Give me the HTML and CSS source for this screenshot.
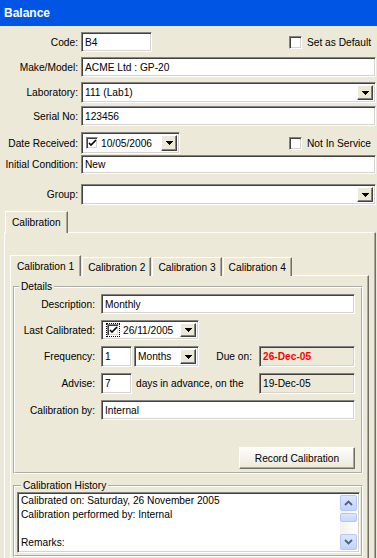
FILE: index.html
```html
<!DOCTYPE html>
<html lang="en">
<head>
    <meta charset="UTF-8">
    <meta name="viewport" content="width=device-width, initial-scale=1.0">
    <title>Balance</title>
    <link rel="stylesheet" href="styles.css">
</head>
<body>
    <div class="titlebar">Balance</div>

    <div class="form">
        <div class="row">
            <span class="lbl">Code:</span>
            <div class="field w-code">B4</div>
            <label class="check"><span class="box"></span>Set as Default</label>
        </div>
        <div class="row">
            <span class="lbl">Make/Model:</span>
            <div class="field grow">ACME Ltd : GP-20</div>
        </div>
        <div class="row row-tall">
            <span class="lbl">Laboratory:</span>
            <div class="field select grow">111 (Lab1)
                <span class="dd"><svg width="7" height="4" viewBox="0 0 7 4"><path d="M0 0h7v1H0zM1 1h5v1H1zM2 2h3v1H2zM3 3h1v1H3z"/></svg></span>
            </div>
        </div>
        <div class="row row-serial">
            <span class="lbl">Serial No:</span>
            <div class="field grow">123456</div>
        </div>
        <div class="row row-date">
            <span class="lbl">Date Received:</span>
            <div class="field select picker w-date">
                <span class="box small checked"><svg width="9" height="9" viewBox="0 0 9 9"><path d="M1 4l2 2 5-5" fill="none" stroke="#000" stroke-width="1.6"/></svg></span>
                <span class="date">10/05/2006</span>
                <span class="dd"><svg width="7" height="4" viewBox="0 0 7 4"><path d="M0 0h7v1H0zM1 1h5v1H1zM2 2h3v1H2zM3 3h1v1H3z"/></svg></span>
            </div>
            <label class="check"><span class="box"></span>Not In Service</label>
        </div>
        <div class="row row-init">
            <span class="lbl">Initial Condition:</span>
            <div class="field grow">New</div>
        </div>
        <div class="row row-group">
            <span class="lbl">Group:</span>
            <div class="field select grow">
                <span class="dd"><svg width="7" height="4" viewBox="0 0 7 4"><path d="M0 0h7v1H0zM1 1h5v1H1zM2 2h3v1H2zM3 3h1v1H3z"/></svg></span>
            </div>
        </div>
    </div>

    <div class="tabs outer">
        <div class="tabstrip">
            <div class="tab active">Calibration</div>
        </div>
        <div class="panel outer-panel">
            <div class="tabstrip inner">
                <div class="tab active">Calibration 1</div>
                <div class="tab">Calibration 2</div>
                <div class="tab">Calibration 3</div>
                <div class="tab">Calibration 4</div>
            </div>
            <div class="panel inner-panel">
                <fieldset class="group details">
                    <legend>Details</legend>
                    <div class="drow">
                        <span class="dlbl">Description:</span>
                        <div class="field grow">Monthly</div>
                    </div>
                    <div class="drow">
                        <span class="dlbl">Last Calibrated:</span>
                        <div class="field select picker w-last">
                            <span class="focus"><span class="box small checked"><svg width="9" height="9" viewBox="0 0 9 9"><path d="M1 4l2 2 5-5" fill="none" stroke="#000" stroke-width="1.6"/></svg></span></span>
                            <span class="date">26/11/2005</span>
                            <span class="dd"><svg width="7" height="4" viewBox="0 0 7 4"><path d="M0 0h7v1H0zM1 1h5v1H1zM2 2h3v1H2zM3 3h1v1H3z"/></svg></span>
                        </div>
                    </div>
                    <div class="drow drow-tall">
                        <span class="dlbl">Frequency:</span>
                        <div class="field w-num">1</div>
                        <div class="field select w-unit">Months
                            <span class="dd"><svg width="7" height="4" viewBox="0 0 7 4"><path d="M0 0h7v1H0zM1 1h5v1H1zM2 2h3v1H2zM3 3h1v1H3z"/></svg></span>
                        </div>
                        <span class="side-lbl">Due on:</span>
                        <div class="field readonly w-side due">26-Dec-05</div>
                    </div>
                    <div class="drow drow-tall">
                        <span class="dlbl">Advise:</span>
                        <div class="field w-num">7</div>
                        <span class="after">days in advance, on the</span>
                        <div class="field readonly w-side">19-Dec-05</div>
                    </div>
                    <div class="drow">
                        <span class="dlbl">Calibration by:</span>
                        <div class="field grow">Internal</div>
                    </div>
                    <div class="actions">
                        <button class="btn">Record Calibration</button>
                    </div>
                </fieldset>

                <fieldset class="group history">
                    <legend>Calibration History</legend>
                    <div class="field memo">
                        <div class="memo-text">
                            <div>Calibrated on: Saturday, 26 November 2005</div>
                            <div>Calibration performed by: Internal</div>
                            <div>&nbsp;</div>
                            <div>Remarks:</div>
                        </div>
                        <div class="scrollbar">
                            <span class="sb-btn"><svg width="9" height="6" viewBox="0 0 9 6"><path d="M1 5l3.5-3.5L8 5" fill="none" stroke="#4d6185" stroke-width="1.8"/></svg></span>
                            <span class="sb-thumb"></span>
                            <span class="sb-track"></span>
                            <span class="sb-btn"><svg width="9" height="6" viewBox="0 0 9 6"><path d="M1 1l3.5 3.5L8 1" fill="none" stroke="#4d6185" stroke-width="1.8"/></svg></span>
                        </div>
                    </div>
                </fieldset>
            </div>
        </div>
    </div>
</body>
</html>
```

FILE: styles.css
```css
* { box-sizing: border-box; }
body { margin: 0; width: 377px; height: 558px; overflow: hidden; background: #ece9d8; font-family: "Liberation Sans", Arial, sans-serif; font-size: 10.2px; color: #000; }

.titlebar { height: 26px; padding-left: 4px; display: flex; align-items: center; background: #0055e5; color: #fff; font-weight: bold; font-size: 12px; }

/* top form */
.form { padding: 6px 1px 0 0; }
.row { display: flex; align-items: center; height: 20px; margin-top: 5px; }
.row:first-child { margin-top: 0; }
.row-tall { height: 21px; }
.row-serial { margin-top: 3px; }
.row-date { height: 22px; margin-top: 6px; }
.row-init { height: 19px; margin-top: 1px; }
.row-group { height: 21px; margin-top: 10px; }
.lbl { flex: none; width: 81px; padding-right: 3px; text-align: right; white-space: nowrap; }

.field { height: 100%; display: flex; align-items: center; padding: 0 3px; background: #fff; white-space: nowrap; border: 1px solid; border-color: #848284 #fff #fff #848284; box-shadow: inset 1px 1px 0 #424142, inset -1px -1px 0 #d6d3ce; }
.grow { flex: 1; }
.w-code { width: 71px; }
.w-date { width: 99px; }
.select { padding-right: 2px; }
.dd { margin-left: auto; flex: none; width: 16px; height: calc(100% - 4px); display: flex; align-items: center; justify-content: center; background: #ece9d8; border: 1px solid; border-color: #fff #424142 #424142 #fff; box-shadow: inset -1px -1px 0 #848284; }
.dd svg { display: block; }
.picker { padding-left: 4px; }
.date { margin-left: 3px; }

.check { margin-left: auto; padding-right: 5px; display: flex; align-items: center; gap: 5px; }
.box { flex: none; width: 13px; height: 13px; display: flex; align-items: center; justify-content: center; background: #fff; border: 1px solid; border-color: #848284 #fff #fff #848284; box-shadow: inset 1px 1px 0 #424142, inset -1px -1px 0 #d6d3ce; }
.box.small { width: 12px; height: 12px; }
.focus { padding: 1px; outline: 1px dotted #000; outline-offset: -1px; display: flex; }

/* tabs */
.tabs { margin: 6px 1px 0 4px; }
.tabstrip { display: flex; align-items: flex-end; gap: 1px; padding-left: 1px; }
.tab { height: 19px; padding: 0 5px; display: flex; align-items: center; margin-bottom: -1px; background: #ece9d8; border: 1px solid; border-bottom: 0; border-color: #fff #716f64 transparent #fff; box-shadow: inset -1px 0 0 #aca899; white-space: nowrap; }
.tab.active { height: 22px; padding: 0 6px; position: relative; z-index: 1; }
.inner .tab.active { height: 21px; }
.tabstrip.inner { padding-left: 0; }

.panel { border: 1px solid; border-color: #fff #716f64 #716f64 #fff; box-shadow: inset -1px -1px 0 #aca899; }
.outer-panel { padding: 22px 6px 10px 5px; height: 340px; }
.inner-panel { padding: 4px 5px 10px 2px; height: 300px; }

/* group boxes */
.group { margin: 0; padding: 0 6px 0 0; border: 2px groove #fff; min-width: 0; }
.group legend { margin-left: 4px; padding: 0 2px; line-height: 13px; }
.drow { display: flex; align-items: center; height: 20px; margin-top: 6px; }
.drow:first-of-type { margin-top: 1px; }
.drow-tall { height: 21px; }
.dlbl { flex: none; width: 86px; padding-right: 6px; text-align: right; white-space: nowrap; }
.w-last { width: 98px; }
.w-num { width: 31px; }
.w-unit { width: 65px; margin-left: 2px; }
.w-side { width: 96px; }
.side-lbl { margin-left: auto; margin-right: 7px; }
.after { margin-left: 4px; margin-right: auto; }
.readonly { background: #ece9d8; }
.due { color: #ff0000; font-weight: bold; }

.actions { display: flex; justify-content: flex-end; margin-top: 27px; padding-bottom: 3px; }
.btn { height: 22px; width: 116px; font: inherit; color: #000; background: linear-gradient(#fdfdfc, #ece9d8); border: 1px solid; border-color: #fff #716f64 #716f64 #fff; box-shadow: inset -1px -1px 0 #aca899; border-radius: 1px; }

.history { margin-top: 5px; padding: 0 1px 2px 2px; }
.memo { height: 61px; padding: 2px 2px 2px 3px; align-items: stretch; }
.memo-text { flex: 1; line-height: 14px; margin-top: -1px; }
.scrollbar { flex: none; width: 17px; display: flex; flex-direction: column; background: linear-gradient(90deg, #f3f1ec, #fefefe); }
.sb-btn { height: 16px; display: flex; align-items: center; justify-content: center; background: linear-gradient(#dce6fd, #c3d3fb); border: 1px solid #b4c8f6; border-radius: 2px; }
.sb-thumb { height: 9px; margin-top: 2px; background: linear-gradient(#dce6fd, #c6d5fb); border: 1px solid #b4c8f6; border-radius: 2px; }
.sb-track { flex: 1; }
```
